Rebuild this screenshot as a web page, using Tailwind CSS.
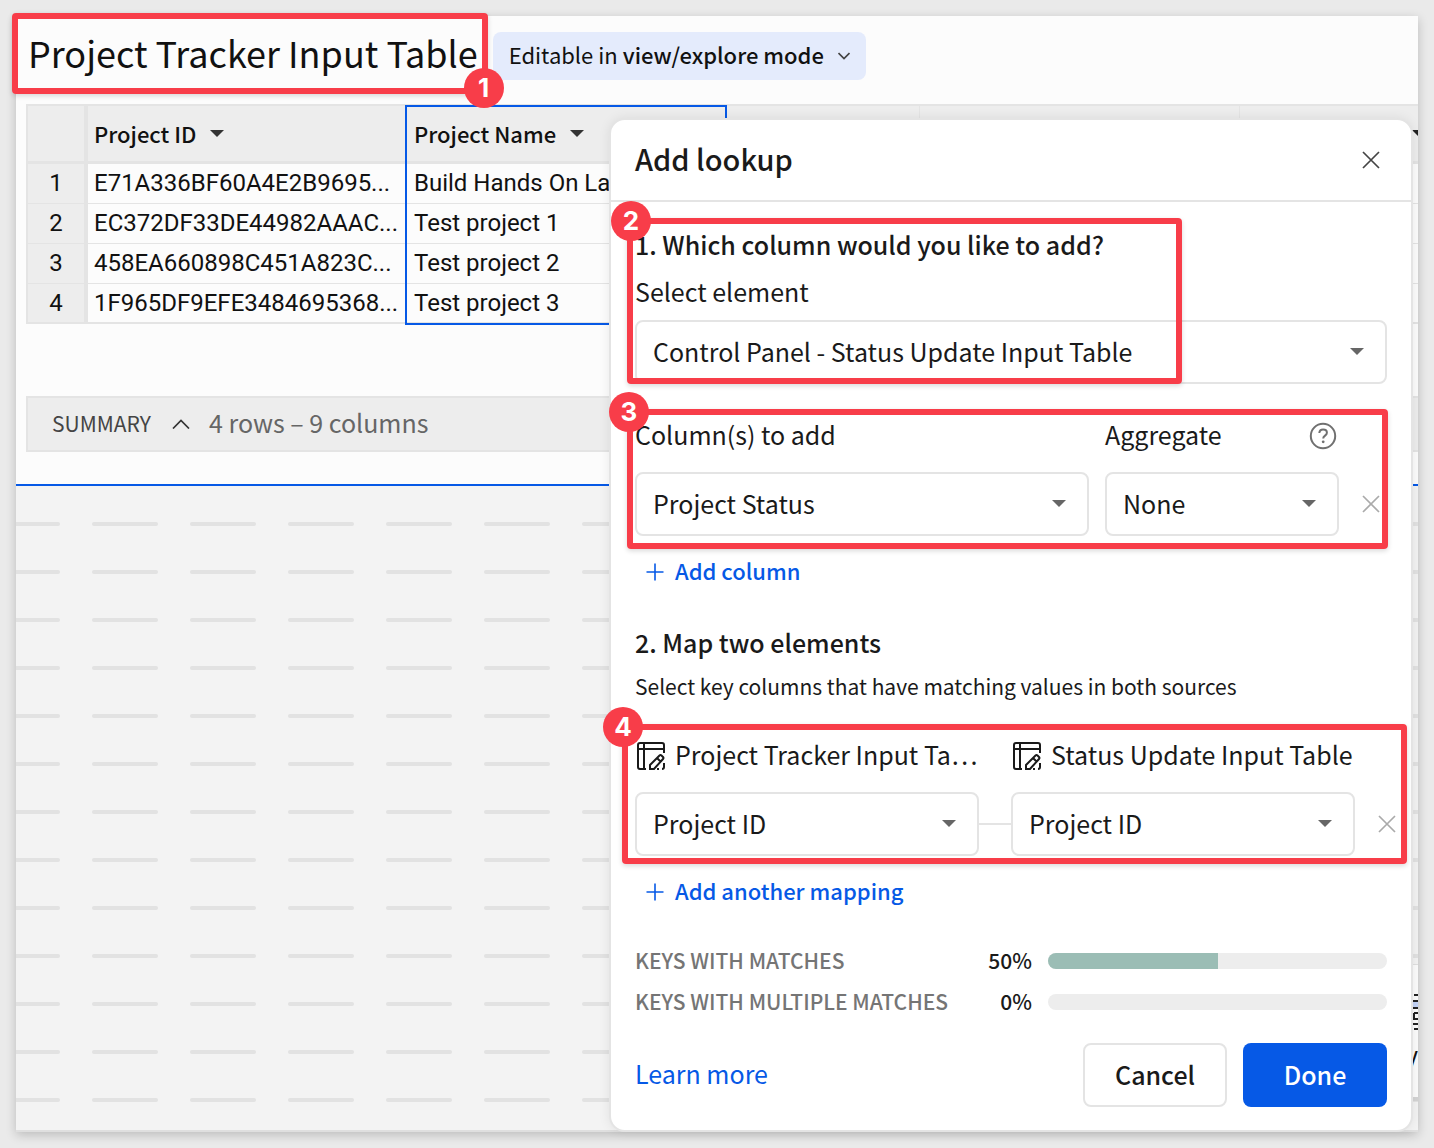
<!DOCTYPE html>
<html lang="en">
<head>
<meta charset="utf-8">
<meta name="viewport" content="width=device-width, initial-scale=1">
<title>Project Tracker Input Table</title>
<script src="https://cdn.jsdelivr.net/npm/@tailwindcss/browser@4"></script>
</head>
<body class="bg-[#eaeaea] font-['Noto_Sans_CJK_KR','Noto_Sans',sans-serif] text-[#1a1a1a]">
<svg class="hidden" aria-hidden="true">
  <symbol id="caret" viewBox="0 0 14 7"><path d="M0 0h14L7 7z" fill="currentColor"/></symbol>
  <symbol id="close" viewBox="0 0 18 18"><path d="M1 1l16 16M17 1L1 17" fill="none" stroke="currentColor" stroke-width="1.7"/></symbol>
  <symbol id="plus" viewBox="0 0 18 18"><path d="M9 0.5v17M0.5 9h17" fill="none" stroke="currentColor" stroke-width="1.6"/></symbol>
  <symbol id="input-table" viewBox="0 0 28 28">
    <g fill="none" stroke="currentColor" stroke-width="2">
      <path d="M27 11V3a2 2 0 0 0-2-2H3a2 2 0 0 0-2 2v22a2 2 0 0 0 2 2h6M7 1v26M1 7h26"/>
      <path d="M13 27v-4l9.500-9.500a1.500 1.500 0 0 1 2 0l1.500 1.500a1.500 1.500 0 0 1 0 2L17 27zM20 16l4 4M20 27h2M27 21v4a2 2 0 0 1-2 2"/>
    </g>
  </symbol>
</svg>

<div class="flex min-h-screen flex-col p-4">
  <div class="grid flex-1 bg-[#fcfcfc] shadow-[0_3px_10px_rgba(0,0,0,0.2)]">

    <!-- Workbook page -->
    <main class="col-start-1 row-start-1 flex min-w-0 flex-col text-[#111]">
      <header class="flex h-[88px] items-center pb-2 pl-3">
        <div class="relative">
          <h1 class="pb-2 text-[36px] leading-10 whitespace-nowrap">Project Tracker Input Table</h1>
          <div class="absolute -top-[19px] -right-[10px] -bottom-[14px] -left-4 z-10 rounded-sm border-6 border-[#f83d49] shadow-[0_2px_5px_rgba(0,0,0,0.15)]">
            <span class="absolute -right-[22px] -bottom-5 flex size-10 items-center justify-center rounded-full bg-[#f83d49] pb-[2px] font-['Inter',sans-serif] text-[26px] font-bold text-white">1</span>
          </div>
        </div>
        <button class="ml-[15px] flex h-12 items-center gap-[14px] rounded-lg bg-[#e4ebfc] px-4 text-[22px] whitespace-nowrap">
          <span class="pb-1">Editable in <b class="font-medium">view/explore mode</b></span>
          <svg class="h-2 w-3" viewBox="0 0 12 8" fill="none" stroke="#444" stroke-width="1.700"><path d="M0.500 1L6 6.500L11.500 1"/></svg>
        </button>
      </header>

      <div class="flex-none overflow-hidden pb-px pl-[10px]">
        <div class="relative w-[1406px]">
          <table class="w-full table-fixed border-separate border-spacing-0 border-l-2 border-[#e4e4e4] text-left font-['Roboto',sans-serif] text-[24px]">
            <colgroup><col class="w-[58px]"><col class="w-[320px]"><col class="w-[320px]"><col class="w-[194px]"><col class="w-[320px]"><col class="w-[192px]"></colgroup>
            <thead class="font-['Noto_Sans_CJK_KR',sans-serif] text-[22px]">
              <tr class="h-[60px] bg-[#ededed]">
                <th class="border-t-2 border-r-2 border-b-3 border-[#e4e4e4] p-0"></th>
                <th class="border-t-2 border-b-3 border-l-2 border-[#e4e4e4] px-[6px] py-0 font-medium"><span class="flex items-center gap-[14px]"><span class="pb-px leading-8">Project ID</span> <svg class="h-[7px] w-[14px] text-[#333]"><use href="#caret"/></svg></span></th>
                <th class="border-t-2 border-b-3 border-[#e4e4e4] px-2 py-0 font-medium"><span class="flex items-center gap-[14px]"><span class="pb-px leading-8">Project Name</span> <svg class="h-[7px] w-[14px] text-[#333]"><use href="#caret"/></svg></span></th>
                <th class="border-t-2 border-r border-b-3 border-[#e4e4e4] p-0"></th>
                <th class="border-t-2 border-r border-b-3 border-[#e4e4e4] p-0"></th>
                <th class="border-t-2 border-b-3 border-[#e4e4e4] py-0 pr-[6px]"><svg class="ml-auto h-[7px] w-[14px] text-[#222]"><use href="#caret"/></svg></th>
              </tr>
            </thead>
            <tbody>
              <tr class="h-10">
                <th class="border-r-2 border-b border-[#e4e4e4] bg-[#ededed] px-0 pt-0 pb-[2px] text-center font-normal">1</th>
                <td class="border-b border-l-2 border-[#e4e4e4] px-[6px] pt-0 pb-[2px]">E71A336BF60A4E2B9695...</td>
                <td class="border-b border-[#e4e4e4] px-2 pt-0 pb-[2px] whitespace-nowrap">Build Hands On Lab</td>
                <td class="border-b border-[#e4e4e4]" colspan="3"></td>
              </tr>
              <tr class="h-10">
                <th class="border-r-2 border-b border-[#e4e4e4] bg-[#ededed] px-0 pt-0 pb-[2px] text-center font-normal">2</th>
                <td class="border-b border-l-2 border-[#e4e4e4] px-[6px] pt-0 pb-[2px]">EC372DF33DE44982AAAC...</td>
                <td class="border-b border-[#e4e4e4] px-2 pt-0 pb-[2px]">Test project 1</td>
                <td class="border-b border-[#e4e4e4]" colspan="3"></td>
              </tr>
              <tr class="h-10">
                <th class="border-r-2 border-b border-[#e4e4e4] bg-[#ededed] px-0 pt-0 pb-[2px] text-center font-normal">3</th>
                <td class="border-b border-l-2 border-[#e4e4e4] px-[6px] pt-0 pb-[2px]">458EA660898C451A823C...</td>
                <td class="border-b border-[#e4e4e4] px-2 pt-0 pb-[2px]">Test project 2</td>
                <td class="border-b border-[#e4e4e4]" colspan="3"></td>
              </tr>
              <tr class="h-10">
                <th class="border-r-2 border-b-2 border-[#e4e4e4] bg-[#ededed] p-0 text-center font-normal">4</th>
                <td class="border-b-2 border-l-2 border-[#e4e4e4] px-[6px] py-0">1F965DF9EFE3484695368...</td>
                <td class="border-b-2 border-[#e4e4e4] px-2 py-0">Test project 3</td>
                <td class="border-b-2 border-[#e4e4e4]" colspan="3"></td>
              </tr>
            </tbody>
          </table>
          <!-- Selected column outline -->
          <div class="absolute top-px left-[379px] h-[220px] w-[322px] border-2 border-[#0659e6]"></div>
        </div>
      </div>

      <div class="mt-[71px] ml-[10px] flex h-14 flex-none items-center border-y-2 border-l-2 border-[#e4e4e4] bg-[#ededed] pl-6">
        <span class="text-[21px] text-[#444]">SUMMARY</span>
        <svg class="ml-[21px] h-[10px] w-[18px]" viewBox="0 0 18 10" fill="none" stroke="#333" stroke-width="1.700"><path d="M1 9.500L9 1.500L17 9.500"/></svg>
        <span class="ml-[19px] pb-[2px] text-[25px] text-[#666]">4 rows – 9 columns</span>
      </div>

      <!-- Empty canvas below the element -->
      <div class="relative mt-8 flex flex-1 flex-col overflow-hidden border-t-2 border-b-2 border-t-[#0659e6] border-b-[#dfdfdf] bg-[#f3f3f3]">
        <svg class="w-full flex-1" aria-hidden="true">
          <defs><pattern id="dashes" width="98" height="48" patternUnits="userSpaceOnUse"><rect x="76" y="36" width="66" height="4" rx="2" fill="#e2e2e2"/><rect x="-22" y="36" width="66" height="4" rx="2" fill="#e2e2e2"/></pattern></defs>
          <rect width="100%" height="100%" fill="url(#dashes)"/>
        </svg>
        <div class="absolute right-0 bottom-[29px] flex h-[137px] w-6 flex-col items-end border-t border-b-4 border-t-[#e0e0e0] border-b-[#d4d4d4] bg-[#fcfcfc] pt-[29px]">
          <svg class="h-9 w-[6px] flex-none" viewBox="0 0 6 36"><path d="M0 8h6v5H0z" fill="#c3d3f7"/><path d="M2 1h4M0 7h6M0 14h6M2 19h4M0 25h6M0 30h6M2 35h4M2 19v6" fill="none" stroke="#222" stroke-width="2"/></svg>
          <span class="mt-[6px] text-[25px] leading-9">y</span>
        </div>
      </div>
    </main>

    <!-- Lookup dialog -->
    <section role="dialog" aria-labelledby="dialog-title" class="relative col-start-1 row-start-1 mt-[102px] mr-[5px] flex w-[804px] flex-col self-start justify-self-end rounded-2xl border-2 border-[#e4e4e4] bg-white shadow-[0_0_12px_rgba(0,0,0,0.08)]">
      <header class="flex h-[82px] items-center justify-between border-b-2 border-[#e4e4e4] pr-[31px] pl-6">
        <h2 id="dialog-title" class="pb-[2px] text-[29px] font-medium">Add lookup</h2>
        <button aria-label="Close"><svg class="size-[18px] text-[#444]"><use href="#close"/></svg></button>
      </header>

      <div class="px-6 pt-6 pb-[23px] text-[25px]">
        <div class="relative">
          <h3 class="leading-9 font-medium">1. Which column would you like to add?</h3>
          <label for="element" class="mt-[11px] block leading-9">Select element</label>
          <div class="relative mt-[11px]">
            <select id="element" class="h-16 w-full appearance-none rounded-lg border-2 border-[#e4e4e4] bg-white pl-4"><option>Control Panel - Status Update Input Table</option></select>
            <svg class="pointer-events-none absolute top-7 right-[23px] h-[7px] w-[14px] text-[#666]"><use href="#caret"/></svg>
          </div>
          <div class="pointer-events-none absolute -top-2 bottom-0 -left-2 w-[555px] rounded-sm border-6 border-[#f83d49] shadow-[0_2px_5px_rgba(0,0,0,0.15)]">
            <span class="absolute -top-[23px] -left-[22px] flex size-10 items-center justify-center rounded-full bg-[#f83d49] pb-[2px] font-['Inter',sans-serif] text-[26px] font-bold text-white">2</span>
          </div>
        </div>

        <div class="relative mt-8">
          <div class="grid grid-cols-[1fr_234px_32px] gap-4">
            <label for="column" class="leading-9">Column(s) to add</label>
            <div class="flex items-center justify-between pr-[2px]">
              <label for="aggregate" class="leading-9">Aggregate</label>
              <svg class="mt-1 size-7" viewBox="0 0 28 28" fill="none" stroke="#707070" stroke-width="2"><circle cx="14" cy="14" r="12.200"/><path d="M10.300 11c.2-2.200 1.700-3.500 3.800-3.500 2.200 0 3.800 1.200 3.800 3.200 0 2.900-3.700 2.900-3.700 5.800"/><circle cx="14.200" cy="19.800" r="1.400" fill="#707070" stroke="none"/></svg>
            </div>
          </div>
          <div class="mt-5 grid grid-cols-[1fr_234px_32px] items-center gap-4">
            <div class="relative">
              <select id="column" class="h-16 w-full appearance-none rounded-lg border-2 border-[#e4e4e4] bg-white pl-4"><option>Project Status</option></select>
              <svg class="pointer-events-none absolute top-7 right-[23px] h-[7px] w-[14px] text-[#666]"><use href="#caret"/></svg>
            </div>
            <div class="relative">
              <select id="aggregate" class="h-16 w-full appearance-none rounded-lg border-2 border-[#e4e4e4] bg-white pl-4"><option>None</option></select>
              <svg class="pointer-events-none absolute top-7 right-[23px] h-[7px] w-[14px] text-[#666]"><use href="#caret"/></svg>
            </div>
            <button aria-label="Remove column" class="flex justify-center"><svg class="size-[18px] text-[#aaa]"><use href="#close"/></svg></button>
          </div>
          <div class="pointer-events-none absolute -top-[7px] -right-px -bottom-[13px] -left-2 rounded-sm border-6 border-[#f83d49] shadow-[0_2px_5px_rgba(0,0,0,0.15)]">
            <span class="absolute -top-[23px] -left-6 flex size-10 items-center justify-center rounded-full bg-[#f83d49] pb-[2px] font-['Inter',sans-serif] text-[26px] font-bold text-white">3</span>
          </div>
        </div>

        <button class="mt-4 ml-[11px] flex h-10 items-center gap-[11px] text-[22px] font-medium text-[#0659e6]"><svg class="size-[18px]"><use href="#plus"/></svg><span class="pb-1">Add column</span></button>

        <h3 class="mt-8 leading-9 font-medium">2. Map two elements</h3>
        <p class="mt-2 text-[21px] leading-9">Select key columns that have matching values in both sources</p>

        <div class="relative mt-8">
          <div class="grid grid-cols-[344px_344px] gap-8">
            <label for="left-key" class="flex items-center gap-[10px] pl-[2px] leading-9"><svg class="mt-1 size-7 flex-none"><use href="#input-table"/></svg><span class="whitespace-nowrap">Project Tracker Input Ta…</span></label>
            <label for="right-key" class="flex items-center gap-[10px] pl-[2px] leading-9"><svg class="mt-1 size-7 flex-none"><use href="#input-table"/></svg><span class="whitespace-nowrap">Status Update Input Table</span></label>
          </div>
          <div class="mt-5 -mr-4 flex items-center">
            <div class="relative flex-1">
              <select id="left-key" class="h-16 w-full appearance-none rounded-lg border-2 border-[#e4e4e4] bg-white pl-4"><option>Project ID</option></select>
              <svg class="pointer-events-none absolute top-7 right-[23px] h-[7px] w-[14px] text-[#666]"><use href="#caret"/></svg>
            </div>
            <div class="h-[2px] w-8 bg-[#e4e4e4]"></div>
            <div class="relative flex-1">
              <select id="right-key" class="h-16 w-full appearance-none rounded-lg border-2 border-[#e4e4e4] bg-white pl-4"><option>Project ID</option></select>
              <svg class="pointer-events-none absolute top-7 right-[23px] h-[7px] w-[14px] text-[#666]"><use href="#caret"/></svg>
            </div>
            <button aria-label="Remove mapping" class="ml-4 flex w-8 justify-center"><svg class="size-[18px] text-[#aaa]"><use href="#close"/></svg></button>
          </div>
          <div class="pointer-events-none absolute -top-3 -right-5 -bottom-2 -left-[13px] rounded-sm border-6 border-[#f83d49] shadow-[0_2px_5px_rgba(0,0,0,0.15)]">
            <span class="absolute -top-[23px] -left-[25px] flex size-10 items-center justify-center rounded-full bg-[#f83d49] pb-[2px] font-['Inter',sans-serif] text-[26px] font-bold text-white">4</span>
          </div>
        </div>

        <button class="mt-4 ml-[11px] flex h-10 items-center gap-[11px] text-[22px] font-medium text-[#0659e6]"><svg class="size-[18px]"><use href="#plus"/></svg><span class="pb-1">Add another mapping</span></button>

        <dl class="mt-7 text-[21px] font-medium">
          <div class="flex h-[41px] items-center">
            <dt class="flex-1 text-[#757575]">KEYS WITH MATCHES</dt>
            <dd>50%</dd>
            <dd class="ml-4 h-4 w-[339px] overflow-hidden rounded-full bg-[#ededed]" role="progressbar" aria-valuenow="50"><div class="h-full bg-[#9bbdb5]" style="width:50%"></div></dd>
          </div>
          <div class="flex h-[41px] items-center">
            <dt class="flex-1 text-[#757575]">KEYS WITH MULTIPLE MATCHES</dt>
            <dd>0%</dd>
            <dd class="ml-4 h-4 w-[339px] overflow-hidden rounded-full bg-[#ededed]" role="progressbar" aria-valuenow="0"></dd>
          </div>
        </dl>

        <footer class="mt-[21px] flex items-center gap-4">
          <a href="#" class="mr-auto pb-[2px] text-[#0659e6]">Learn more</a>
          <button class="h-16 w-36 rounded-lg border-2 border-[#e4e4e4] font-medium">Cancel</button>
          <button class="h-16 w-36 rounded-lg bg-[#0659e6] font-medium text-white">Done</button>
        </footer>
      </div>
    </section>
  </div>
</div>
</body>
</html>
